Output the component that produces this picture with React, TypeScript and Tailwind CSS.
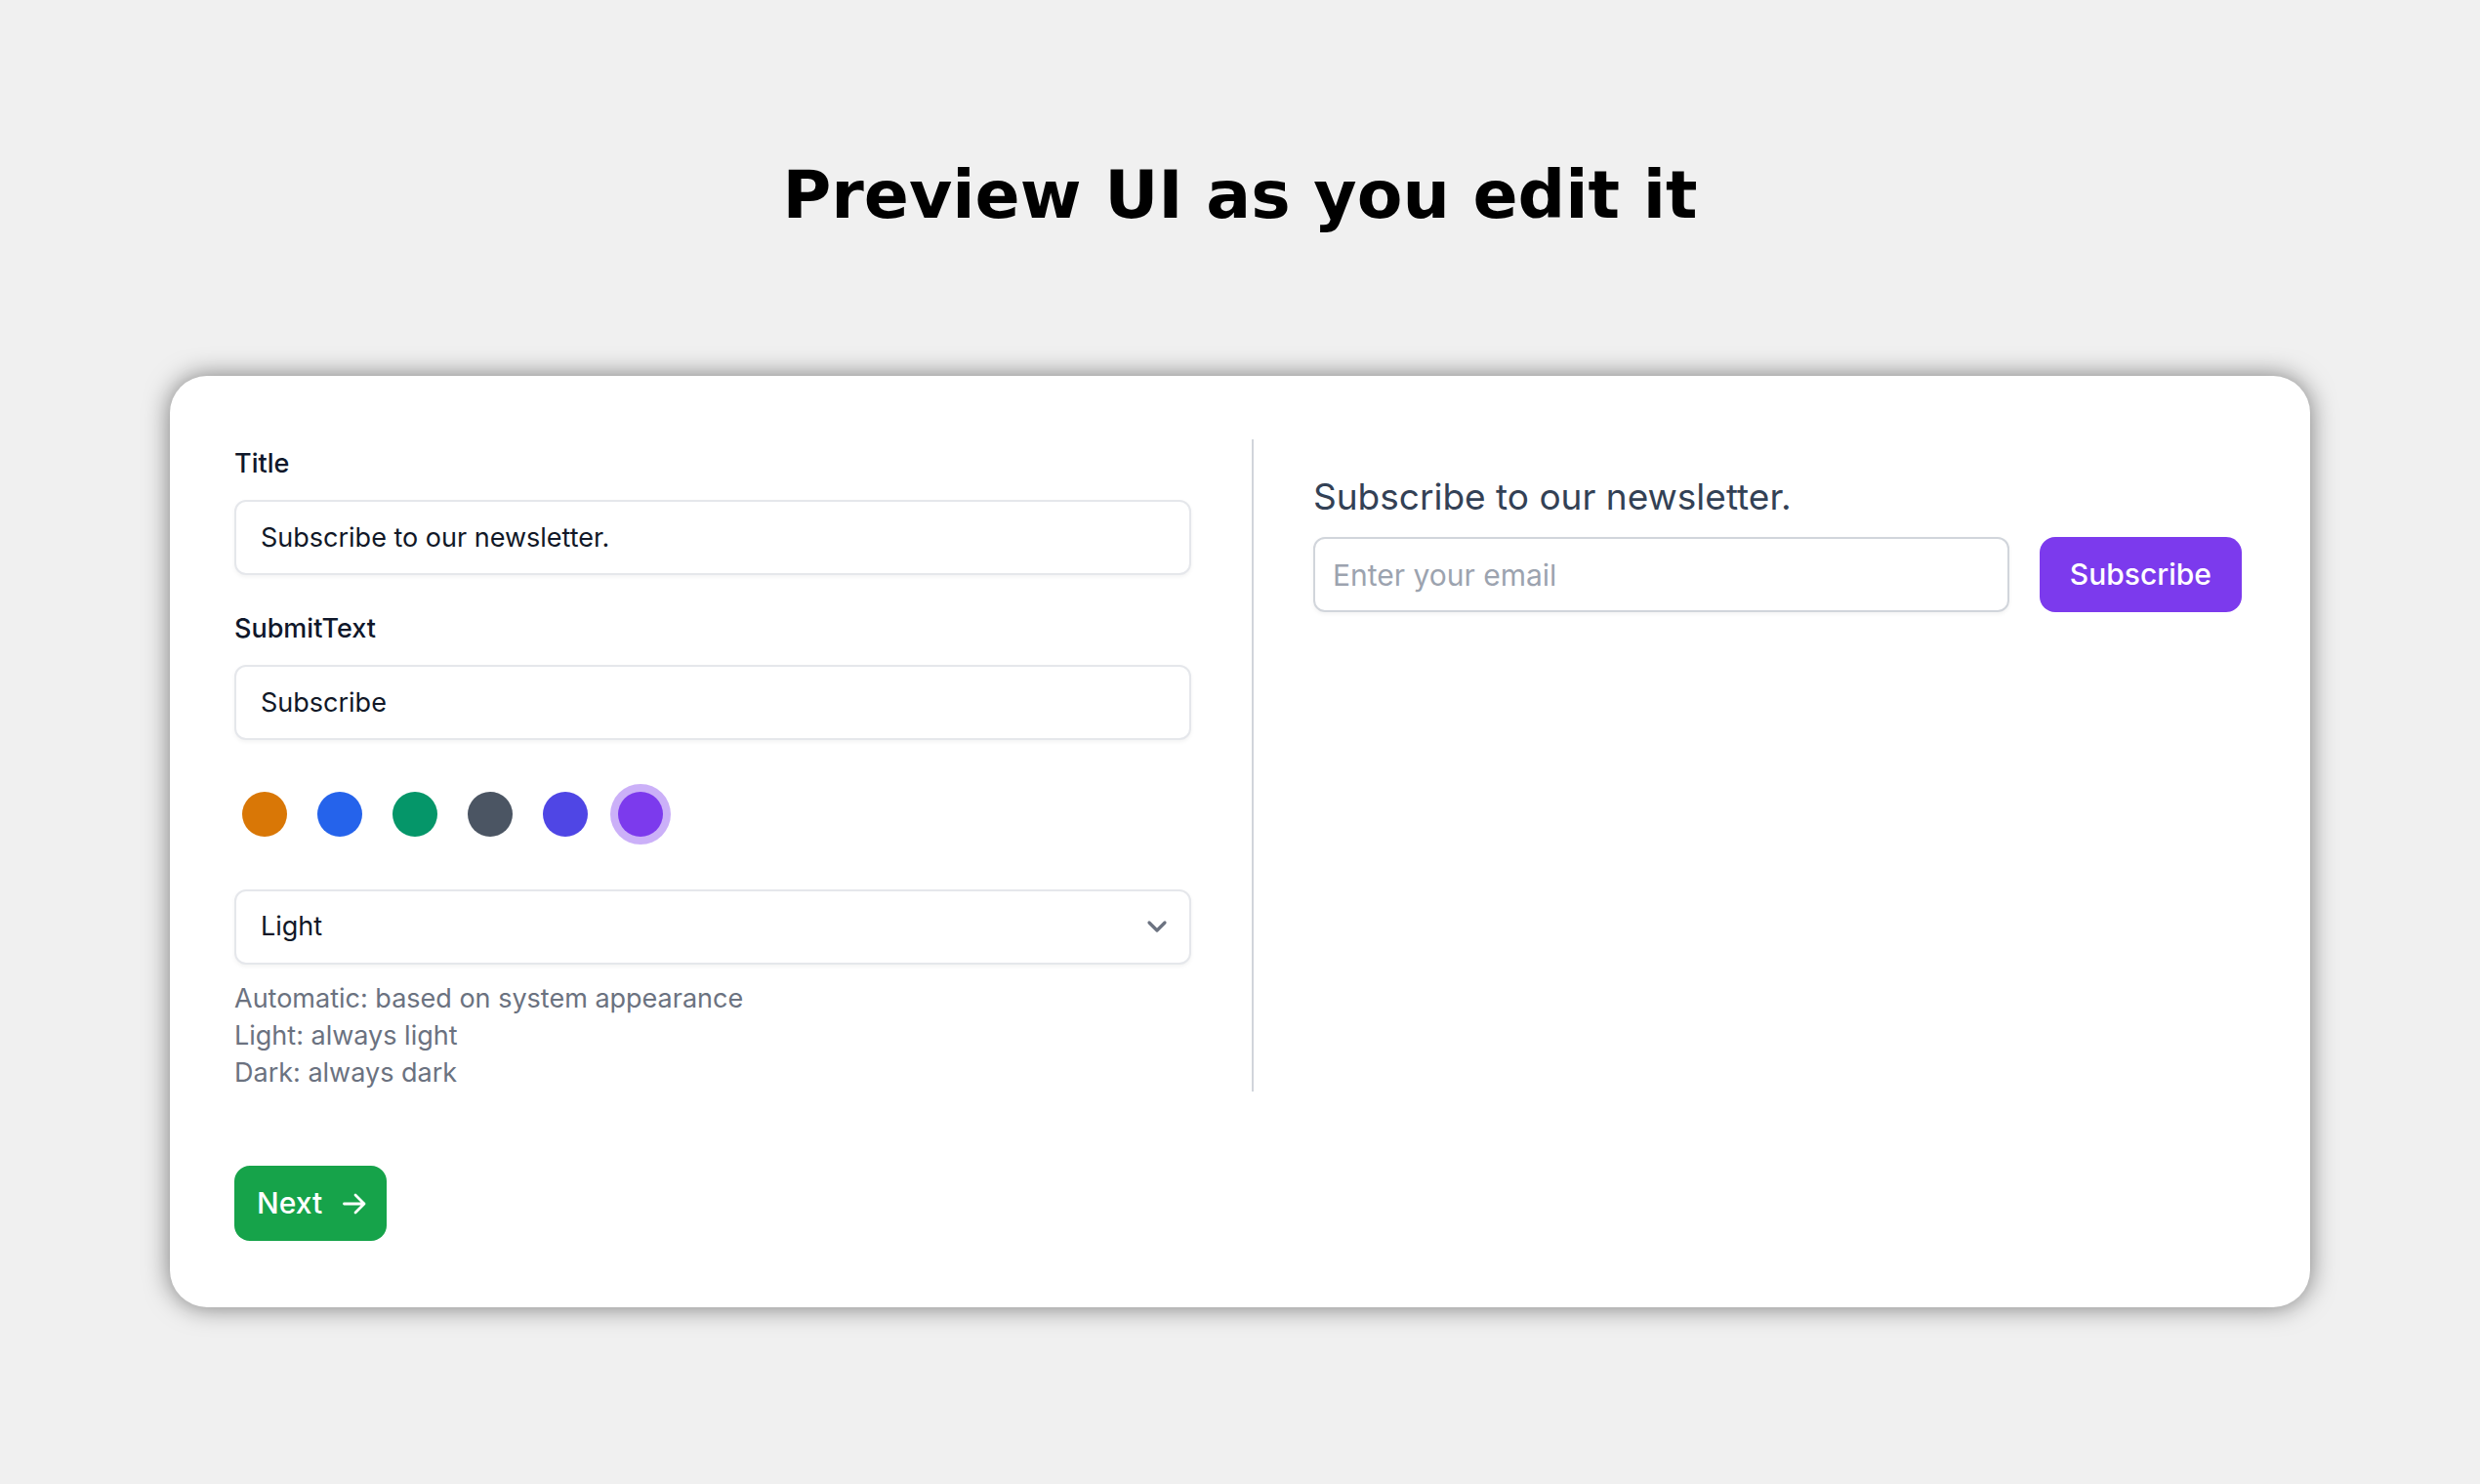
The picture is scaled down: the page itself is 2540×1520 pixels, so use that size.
import { useState } from 'react';
import { clsx } from 'clsx';

const SWATCHES = [
  { name: 'Amber', color: 'bg-[#d97706]', ring: 'checked:ring-[#d97706]/40' },
  { name: 'Blue', color: 'bg-[#2563eb]', ring: 'checked:ring-[#2563eb]/40' },
  { name: 'Emerald', color: 'bg-[#059669]', ring: 'checked:ring-[#059669]/40' },
  { name: 'Gray', color: 'bg-[#4b5563]', ring: 'checked:ring-[#4b5563]/40' },
  { name: 'Indigo', color: 'bg-[#4f46e5]', ring: 'checked:ring-[#4f46e5]/40' },
  { name: 'Violet', color: 'bg-[#7c3aed]', ring: 'checked:ring-[#7c3aed]/40' },
];

const controlClass =
  'block h-[77px] w-full rounded-xl border-2 border-[#e5e7eb] bg-white px-[25px] text-[27px] text-[#111827] shadow-[0_2px_4px_rgba(0,0,0,0.05)] outline-none';

interface TextFieldProps {
  id: string;
  label: string;
  value: string;
  onChange: (value: string) => void;
}

function TextField({ id, label, value, onChange }: TextFieldProps) {
  return (
    <div>
      <label htmlFor={id} className="mb-[18px] block text-[27px] leading-[38px] font-medium text-[#0f172a]">
        {label}
      </label>
      <input
        id={id}
        type="text"
        value={value}
        onChange={(e) => onChange(e.target.value)}
        className={controlClass}
      />
    </div>
  );
}

interface SwatchPickerProps {
  value: string;
  onChange: (value: string) => void;
}

function SwatchPicker({ value, onChange }: SwatchPickerProps) {
  return (
    <div role="radiogroup" aria-label="Color" className="mt-[45px] mb-[46px] flex gap-[15px]">
      {SWATCHES.map((swatch) => (
        <label key={swatch.name} className="flex size-[62px] items-center justify-center">
          <input
            type="radio"
            name="color"
            aria-label={swatch.name}
            value={swatch.name}
            checked={value === swatch.name}
            onChange={() => onChange(swatch.name)}
            className={clsx(
              'size-[46px] appearance-none rounded-full checked:ring-8',
              swatch.color,
              swatch.ring
            )}
          />
        </label>
      ))}
    </div>
  );
}

interface PreviewProps {
  title: string;
  submitText: string;
  buttonColor: string;
}

function Preview({ title, submitText, buttonColor }: PreviewProps) {
  return (
    <form onSubmit={(e) => e.preventDefault()} className="pt-[30px] pl-[61px]">
      <label htmlFor="email" className="mb-3 block text-[37px] leading-[58px] text-[#334155]">
        {title}
      </label>
      <div className="flex gap-[31px]">
        <input
          id="email"
          type="email"
          placeholder="Enter your email"
          className="h-[77px] min-w-0 flex-1 rounded-xl border-2 border-[#d1d5db] px-[18px] text-[30px] shadow-[0_2px_4px_rgba(0,0,0,0.05)] outline-none placeholder:text-[#9ca3af]"
        />
        <button
          type="submit"
          className={clsx('h-[77px] rounded-2xl px-[31px] text-[30px] font-medium text-white', buttonColor)}
        >
          {submitText}
        </button>
      </div>
    </form>
  );
}

export default function App() {
  const [title, setTitle] = useState('Subscribe to our newsletter.');
  const [submitText, setSubmitText] = useState('Subscribe');
  const [color, setColor] = useState('Violet');
  const [theme, setTheme] = useState('Light');

  const buttonColor = SWATCHES.find((swatch) => swatch.name === color)?.color ?? 'bg-[#7c3aed]';

  return (
    <main className="min-h-screen bg-[#f0f0f0] px-[174px] pt-[160px] pb-[180px] font-[Inter,sans-serif]">
      <h1 className="text-center font-['DejaVu_Sans',sans-serif] text-[68px] leading-[80px] font-bold text-black">
        Preview UI as you edit it
      </h1>

      <section className="mt-[145px] rounded-[38px] bg-white pt-[65px] pr-[70px] pb-[68px] pl-[66px] shadow-[0_0_26px_rgba(0,0,0,0.5)]">
        <div className="grid grid-cols-[1044fr_1012fr]">
          <div className="border-r-2 border-[#d1d5db] pt-[6px] pr-[62px]">
            <div className="space-y-9">
              <TextField id="title" label="Title" value={title} onChange={setTitle} />
              <TextField id="submit-text" label="SubmitText" value={submitText} onChange={setSubmitText} />
            </div>

            <SwatchPicker value={color} onChange={setColor} />

            <div className="relative">
              <select
                aria-label="Appearance"
                value={theme}
                onChange={(e) => setTheme(e.target.value)}
                className={clsx(controlClass, 'appearance-none')}
              >
                <option>Automatic</option>
                <option>Light</option>
                <option>Dark</option>
              </select>
              <svg
                viewBox="0 0 24 16"
                className="pointer-events-none absolute top-[30px] right-[23px] h-4 w-6"
                fill="none"
                stroke="#6b7280"
                strokeWidth="3.2"
                strokeLinecap="round"
                strokeLinejoin="round"
                aria-hidden="true"
              >
                <path d="M4 4l8 8 8-8" />
              </svg>
            </div>

            <div className="mt-4 text-[27px] leading-[38px] text-[#6b7280]">
              <p>Automatic: based on system appearance</p>
              <p>Light: always light</p>
              <p>Dark: always dark</p>
            </div>
          </div>

          <Preview title={title} submitText={submitText} buttonColor={buttonColor} />
        </div>

        <button
          type="button"
          className="mt-[76px] flex h-[77px] items-center gap-[18px] rounded-2xl bg-[#16a34a] pr-5 pl-[23px] text-[30px] font-medium text-white"
        >
          Next
          <svg
            viewBox="0 0 28 28"
            className="size-7"
            fill="none"
            stroke="currentColor"
            strokeWidth="2.800"
            strokeLinecap="round"
            strokeLinejoin="round"
            aria-hidden="true"
          >
            <path d="M4.500 14h20.500M16 5l9 9-9 9" />
          </svg>
        </button>
      </section>
    </main>
  );
}
